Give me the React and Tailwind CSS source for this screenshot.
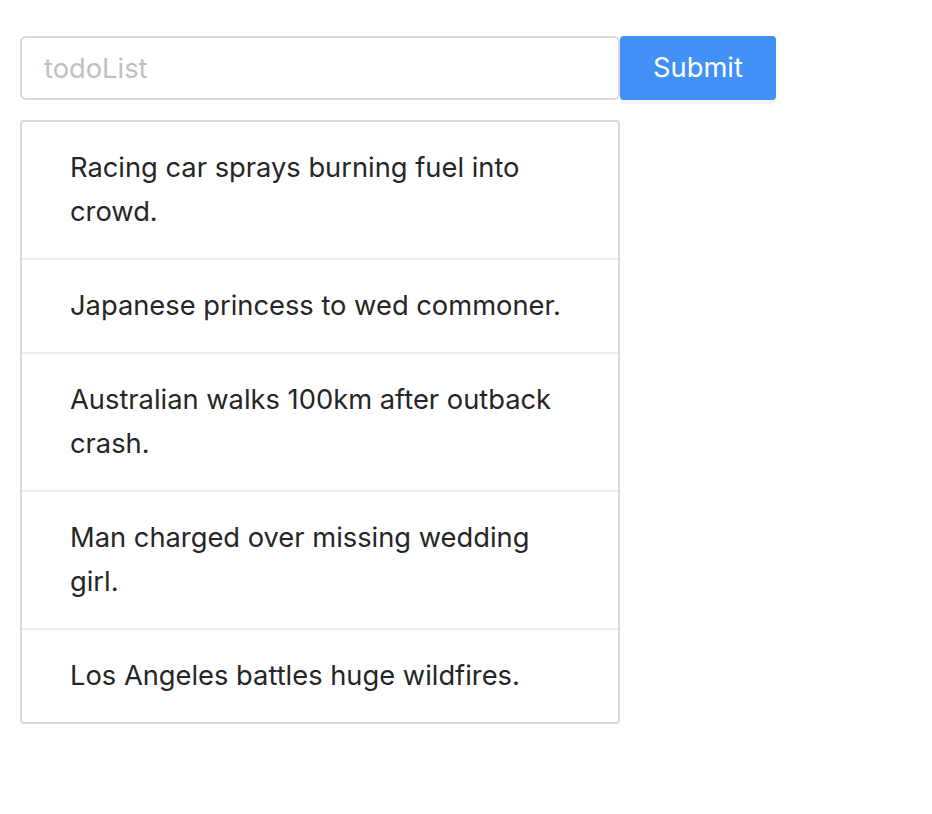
const ITEMS = [
  'Racing car sprays burning fuel into crowd.',
  'Japanese princess to wed commoner.',
  'Australian walks 100km after outback crash.',
  'Man charged over missing wedding girl.',
  'Los Angeles battles huge wildfires.',
];

export default function App() {
  return (
    <div
      className="min-h-screen bg-white pt-[36px] pl-[20px]"
      style={{ fontFamily: 'Inter, "Liberation Sans", Arial, sans-serif' }}
    >
      {/* Input + button */}
      <div className="flex items-start">
        <input
          type="text"
          placeholder="todoList"
          className="w-[600px] h-[64px] px-[22px] border-2 border-[#d9d9d9] rounded-[6px] text-[27.3px] text-[#262626] placeholder:text-[#bfbfbf] outline-none bg-white"
        />
        <button className="h-[64px] w-[156px] bg-[#4190f5] text-white text-[27.3px] rounded-[4px] shadow-[0_4px_0_rgba(0,0,0,0.045)]">
          Submit
        </button>
      </div>

      {/* List */}
      <ul className="mt-[20px] w-[600px] border-2 border-[#d9d9d9] rounded-[4px]">
        {ITEMS.map((item, i) => (
          <li
            key={item}
            className={`px-[48px] py-[24px] text-[27.3px] leading-[44px] text-[#262626] ${
              i < ITEMS.length - 1 ? 'border-b-2 border-[#ececec]' : ''
            }`}
          >
            {item}
          </li>
        ))}
      </ul>
    </div>
  );
}
